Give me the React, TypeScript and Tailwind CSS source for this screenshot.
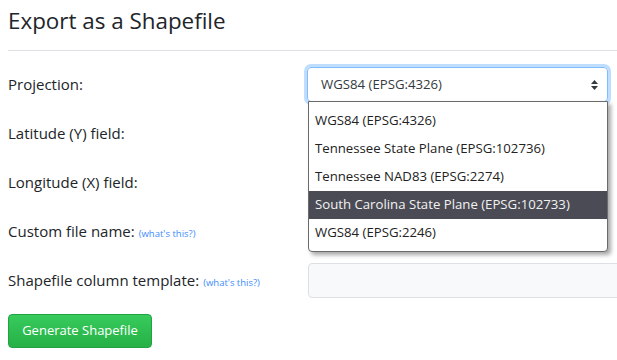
import React from "react";

const font = { fontFamily: '"Open Sans", "Noto Sans", sans-serif' };

function Arrows() {
  return (
    <svg width="7" height="10" viewBox="0 0 7 10" className="absolute right-[9px] top-1/2 -translate-y-1/2">
      <path d="M3.5 0 L7 4 L0 4 Z" fill="#343a40" />
      <path d="M3.5 10 L7 6 L0 6 Z" fill="#343a40" />
    </svg>
  );
}

function Help() {
  return <a className="ml-[4px] text-[9.5px] text-[#3d8bfd] cursor-pointer">(what's this?)</a>;
}

export default function App() {
  const options = [
    "WGS84 (EPSG:4326)",
    "Tennessee State Plane (EPSG:102736)",
    "Tennessee NAD83 (EPSG:2274)",
    "South Carolina State Plane (EPSG:102733)",
    "WGS84 (EPSG:2246)",
  ];
  return (
    <div className="w-[617px] h-[360px] overflow-hidden bg-white px-2 text-[#212529]" style={font}>
      <h3 className="text-[22.4px] leading-[34px] pt-[4px] pb-[12px] font-normal">Export as a Shapefile</h3>
      <div className="h-px bg-[#dfe0e6] -mr-2" />
      <div className="flex flex-col gap-[14px] pt-[16px]">
        <div className="flex items-center h-[35px]">
          <div className="w-[299px] shrink-0 text-[15px]">Projection:</div>
          <div className="relative w-[301px] h-[35px] shrink-0">
            <div className="h-full rounded-[4px] border border-[#80bdff] shadow-[0_0_0_3px_rgba(0,123,255,0.25)] flex items-center pl-[13px] text-[13.2px] text-[#343a40] relative">
              WGS84 (EPSG:4326)
              <Arrows />
            </div>
            <div className="absolute left-[1px] top-[34px] w-[300px] bg-white border border-[#6b6b6b] rounded-b-[4px] shadow-[3px_3px_4px_rgba(0,0,0,0.35)] pt-[5px] pb-[4px] z-10">
              {options.map((o, i) => (
                <div
                  key={i}
                  className={
                    "h-[28px] flex items-center pl-[6px] text-[13.2px] whitespace-nowrap " +
                    (i === 3 ? "bg-[#4b4b55] text-[#f2f2f2]" : "text-[#222]")
                  }
                >
                  {o}
                </div>
              ))}
            </div>
          </div>
        </div>
        <div className="flex items-center h-[35px]">
          <div className="w-[299px] shrink-0 text-[15px]">Latitude (Y) field:</div>
        </div>
        <div className="flex items-center h-[35px]">
          <div className="w-[299px] shrink-0 text-[15px]">Longitude (X) field:</div>
        </div>
        <div className="flex items-center h-[35px]">
          <div className="w-[299px] shrink-0 text-[15px]">
            Custom file name:<Help />
          </div>
        </div>
        <div className="flex items-center h-[35px]">
          <div className="w-[300px] shrink-0 text-[15px] whitespace-nowrap">
            Shapefile column template:<Help />
          </div>
          <div className="w-[320px] h-[35px] shrink-0 rounded-[4px] border border-[#dcdfe3] bg-[#f8f9fb]" />
        </div>
      </div>
      <div className="pt-[16px]">
        <button className="h-[34px] w-[144px] rounded-[4px] border border-[#23a244] bg-gradient-to-b from-[#37cb5c] to-[#26b046] text-white text-[13px]">
          Generate Shapefile
        </button>
      </div>
    </div>
  );
}
